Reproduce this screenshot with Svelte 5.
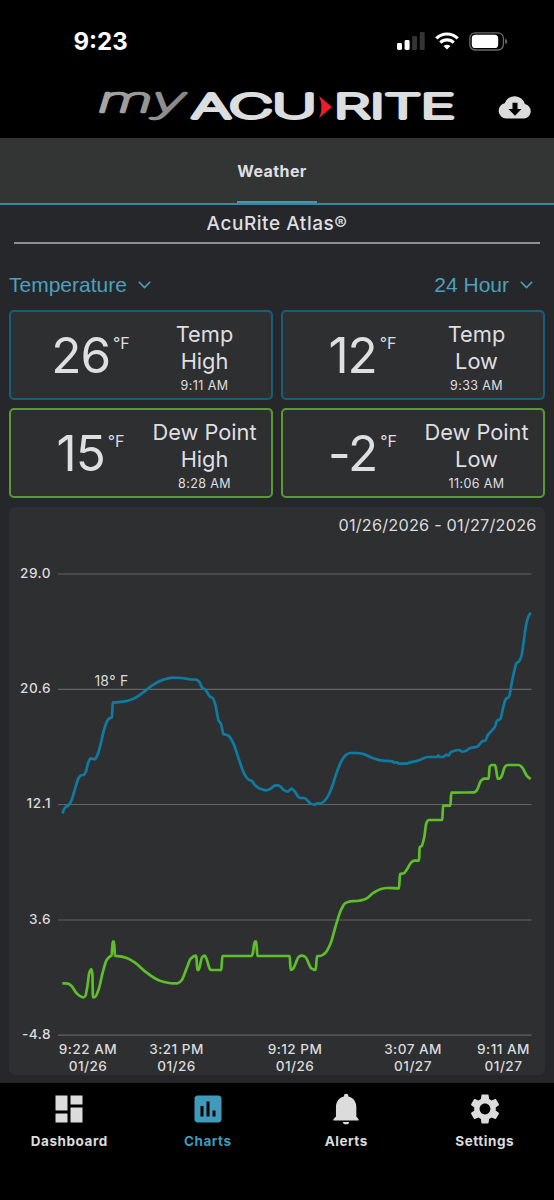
<script lang="ts">
type Point = [number, number];

const readings = [
	{ value: "26", label: "Temp", kind: "High", time: "9:11 AM", tone: "blue" },
	{ value: "12", label: "Temp", kind: "Low", time: "9:33 AM", tone: "blue" },
	{ value: "15", label: "Dew Point", kind: "High", time: "8:28 AM", tone: "green" },
	{ value: "-2", label: "Dew Point", kind: "Low", time: "11:06 AM", tone: "green" },
];

const yTicks = [
	{ label: "29.0", y: 67 },
	{ label: "20.6", y: 182.3 },
	{ label: "12.1", y: 297.5 },
	{ label: "3.6", y: 413 },
	{ label: "-4.8", y: 528.2 },
];

const xTicks = [
	{ time: "9:22 AM", date: "01/26", x: 79 },
	{ time: "3:21 PM", date: "01/26", x: 167.5 },
	{ time: "9:12 PM", date: "01/26", x: 286 },
	{ time: "3:07 AM", date: "01/27", x: 404 },
	{ time: "9:11 AM", date: "01/27", x: 494.5 },
];

const tabs = ["Dashboard", "Charts", "Alerts", "Settings"];
const activeTab = "Charts";

// samples are in device pixels, three to a css pixel
const temperature: Point[] = [
	[188, 940], [190, 932], [196, 922], [206, 916], [214, 902], [224, 870], [236, 834], [244, 826], [252, 824],
	[258, 814], [264, 790], [272, 775], [284, 778], [292, 766], [300, 740], [312, 690], [322, 662], [330, 654],
	[336, 652], [338, 608], [350, 607], [370, 605], [400, 596], [430, 577], [460, 554], [490, 539], [520, 533],
	[545, 534], [570, 538], [588, 539], [598, 546], [606, 562], [618, 571], [630, 590], [638, 594], [646, 614],
	[656, 662], [663, 672], [670, 702], [684, 706], [700, 730], [716, 776], [734, 824], [746, 839], [756, 843],
	[764, 854], [780, 866], [798, 871], [812, 866], [824, 857], [832, 856], [841, 859], [851, 870], [863, 875],
	[875, 866], [883, 873], [895, 890], [901, 894], [913, 894], [923, 902], [931, 910], [943, 914], [953, 910],
	[963, 910], [973, 903], [983, 890], [997, 858], [1011, 815], [1025, 782], [1039, 764], [1051, 759],
	[1071, 759], [1093, 763], [1121, 775], [1147, 782], [1177, 784], [1183, 788], [1191, 787], [1197, 791],
	[1217, 791], [1231, 787], [1245, 784], [1261, 779], [1283, 771], [1311, 771], [1315, 767], [1319, 771],
	[1329, 771], [1339, 764], [1345, 767], [1353, 756], [1377, 750], [1387, 755], [1397, 753], [1411, 744],
	[1431, 740], [1441, 730], [1447, 724], [1457, 721], [1463, 706], [1477, 690], [1485, 680], [1491, 662],
	[1501, 657], [1509, 625], [1517, 598], [1527, 590], [1535, 550], [1543, 512], [1549, 490], [1557, 484],
	[1565, 465], [1571, 424], [1579, 372], [1585, 350], [1592, 338],
];

const dewPoint: Point[] = [
	[187, 1450], [204, 1451], [214, 1457], [226, 1475], [238, 1487], [250, 1492], [256, 1488], [262, 1460],
	[268, 1418], [274, 1407], [277, 1422], [279, 1492], [285, 1491], [296, 1468], [308, 1418], [320, 1380],
	[332, 1368], [335, 1367], [338, 1325], [342, 1325], [345, 1368], [360, 1369], [380, 1374], [404, 1387],
	[440, 1418], [480, 1442], [520, 1450], [532, 1450], [544, 1442], [560, 1405], [572, 1376], [588, 1367],
	[590, 1380], [592, 1410], [596, 1410], [606, 1372], [614, 1367], [620, 1378], [628, 1404], [632, 1410],
	[664, 1410], [667, 1368], [754, 1368], [758, 1362], [764, 1325], [769, 1325], [772, 1368], [869, 1368],
	[872, 1410], [879, 1406], [897, 1370], [905, 1367], [915, 1370], [935, 1406], [947, 1410], [951, 1368],
	[961, 1368], [975, 1360], [991, 1332], [1007, 1278], [1023, 1230], [1035, 1210], [1051, 1204], [1071, 1203],
	[1095, 1198], [1121, 1178], [1143, 1167], [1161, 1164], [1197, 1165], [1200, 1122], [1211, 1120],
	[1221, 1108], [1233, 1088], [1243, 1082], [1257, 1082], [1259, 1042], [1265, 1038], [1273, 1010],
	[1279, 970], [1286, 960], [1327, 960], [1329, 917], [1351, 917], [1354, 878], [1423, 877], [1431, 870],
	[1443, 842], [1453, 836], [1466, 836], [1469, 800], [1475, 795], [1485, 795], [1488, 806], [1493, 836],
	[1499, 836], [1505, 828], [1515, 800], [1523, 795], [1557, 795], [1567, 803], [1581, 828], [1592, 837],
];

// monotone cubic, so the line never overshoots a sample
function linePath(samples: Point[]): string {
	const pts = samples.map(([x, y]) => [x / 3 - 9, y / 3 - 7]);
	const slopes = pts.slice(1).map((p, i) => (p[1] - pts[i][1]) / (p[0] - pts[i][0]));
	const tangents = pts.map((_, i) => {
		const before = slopes[i - 1];
		const after = slopes[i];
		if (before === undefined || after === undefined) return before ?? after;
		if (before * after <= 0) return 0;
		return (2 * before * after) / (before + after);
	});
	let d = `M${pts[0][0].toFixed(2)} ${pts[0][1].toFixed(2)}`;
	for (let i = 1; i < pts.length; i++) {
		const [x0, y0] = pts[i - 1];
		const [x1, y1] = pts[i];
		const dx = (x1 - x0) / 3;
		const c = [x0 + dx, y0 + dx * tangents[i - 1], x1 - dx, y1 - dx * tangents[i], x1, y1];
		d += `C${c.map((n) => n.toFixed(2)).join(" ")}`;
	}
	return d;
}
</script>

<div class="app">
	<div class="status-bar">
		<span class="clock">9:23</span>
		<div class="status-icons">
			<svg width="28" height="18" viewBox="0 0 28 18" fill="#fff">
				<rect x="0" y="11" width="5" height="7" rx="1.4" />
				<rect x="7.6" y="8" width="5" height="10" rx="1.4" />
				<rect x="15.1" y="4" width="5" height="14" rx="1.4" fill="#343434" />
				<rect x="22.7" y="0" width="5" height="18" rx="1.4" fill="#343434" />
			</svg>
			<svg width="24" height="18" viewBox="0 0 24 18" fill="none" stroke="#fff" stroke-width="3.2">
				<path d="M1.3 6.3a15.4 15.4 0 0 1 21.4 0" />
				<path d="M5.3 10.6a9.6 9.6 0 0 1 13.4 0" />
				<path d="M12 17.6l-3.5-3.5a5 5 0 0 1 7 0z" fill="#fff" stroke="none" />
			</svg>
			<svg width="39" height="19" viewBox="0 0 39 19">
				<rect x="0.8" y="0.8" width="33.6" height="17.2" rx="5.4" fill="none" stroke="#6b6b6b" stroke-width="1.3" />
				<rect x="2.8" y="2.7" width="26.4" height="13.4" rx="3.7" fill="#fff" />
				<path d="M36.2 6.5q2 1 2 2.9t-2 2.9z" fill="#6b6b6b" />
			</svg>
		</div>
	</div>

	<header class="brand-bar">
		<svg width="370" height="56" viewBox="-10 -6 370 56" role="img" aria-label="my AcuRite">
			<defs>
				<linearGradient id="my-fade" x1="0" y1="0" x2="1" y2="0">
					<stop offset="0" stop-color="#a8a8a8" />
					<stop offset="1" stop-color="#858585" />
				</linearGradient>
			</defs>
			<text class="logo-my" x="0" y="23.5" textLength="88" lengthAdjust="spacingAndGlyphs">my</text>
			<text class="logo-name" x="94" y="30" textLength="124" lengthAdjust="spacingAndGlyphs">ACU</text>
			<path d="M221 8l13 11-13 11q5-11 0-22z" fill="#ee1c25" />
			<text class="logo-name" x="236" y="30" textLength="121" lengthAdjust="spacingAndGlyphs">RITE</text>
		</svg>
		<svg class="cloud" width="34" height="24" viewBox="0 0 34 24">
			<path
				d="M8.2 23.5A7.7 7.7 0 0 1 6.6 8.3 10.6 10.6 0 0 1 26.9 9.1 7.3 7.3 0 0 1 26.4 23.5z"
				fill="#dcdcdc"
			/>
			<path d="M14.5 7.8h5v6.2h4L17 20.8 10.5 14h4z" fill="#000" />
		</svg>
	</header>

	<nav class="top-tabs">
		<span class="top-tab">Weather</span>
	</nav>

	<main>
		<h1>AcuRite Atlas®</h1>

		<div class="filters">
			{#each ["Temperature", "24 Hour"] as filter}
				<button>
					<span>{filter}</span>
					<svg width="13" height="8" viewBox="0 0 13 8" fill="none" stroke="currentColor" stroke-width="1.5">
						<path d="M0.8 0.8l5.7 5.8 5.7-5.8" />
					</svg>
				</button>
			{/each}
		</div>

		<section class="readings">
			{#each readings as r}
				<article class="reading {r.tone}">
					<div class="value">{r.value}<sup>°F</sup></div>
					<div class="info">
						<span>{r.label}</span>
						<span>{r.kind}</span>
						<small>{r.time}</small>
					</div>
				</article>
			{/each}
		</section>

		<section class="chart">
			<svg width="536" height="568" viewBox="0 0 536 568">
				<text class="range" x="527.6" y="23.7" text-anchor="end">01/26/2026 - 01/27/2026</text>
				{#each yTicks as tick}
					<line x1="49" x2="522.5" y1={tick.y} y2={tick.y} />
					<text class="y-label" x="42" y={tick.y + 3.8} text-anchor="end">{tick.label}</text>
				{/each}
				<path class="series blue" d={linePath(temperature)} />
				<path class="series green" d={linePath(dewPoint)} />
				<text class="callout" x="102.5" y="179.3" text-anchor="middle">18° F</text>
				{#each xTicks as tick}
					<text class="x-label" x={tick.x} y="547.3" text-anchor="middle">{tick.time}</text>
					<text class="x-label" x={tick.x} y="564.2" text-anchor="middle">{tick.date}</text>
				{/each}
			</svg>
		</section>
	</main>

	<nav class="bottom-nav">
		{#each tabs as tab}
			<a href="#{tab.toLowerCase()}" class:active={tab === activeTab}>
				<svg width="36" height="36" viewBox="0 0 24 24" fill="currentColor">
					{#if tab === "Dashboard"}
						<path d="M3 13h8V3H3v10zm0 8h8v-6H3v6zm10 0h8V11h-8v10zm0-18v6h8V3h-8z" />
					{:else if tab === "Charts"}
						<path
							d="M19 3H5c-1.1 0-2 .9-2 2v14c0 1.1.9 2 2 2h14c1.1 0 2-.9 2-2V5c0-1.1-.9-2-2-2zM9 17H7v-7h2v7zm4 0h-2V7h2v10zm4 0h-2v-4h2v4z"
						/>
					{:else if tab === "Alerts"}
						<path
							d="M14.1 20.6a2.1 1.6 0 0 1-4.2 0zM20.4 19.6v-.7L18.9 17v-6.400c0-3.500-2.300-6.200-5.300-6.900v-.4a1.500 1.500 0 0 0-3 0v.4c-3 .7-5.300 3.400-5.300 6.900V17l-1.700 1.900v.7z"
						/>
					{:else}
						<path
							fill-rule="evenodd"
							d="M19.14 12.94c.04-.3.06-.61.06-.94s-.02-.64-.07-.94l2.03-1.58c.18-.14.23-.41.12-.61l-1.92-3.32c-.12-.22-.37-.29-.59-.22l-2.39.96c-.5-.38-1.03-.7-1.62-.94l-.36-2.54c-.04-.24-.24-.41-.48-.41h-3.84c-.24 0-.43.17-.47.41l-.36 2.54c-.59.24-1.13.57-1.62.94l-2.39-.96c-.22-.08-.47 0-.59.22L2.74 8.87c-.12.21-.08.47.12.61l2.03 1.58c-.05.3-.09.63-.09.94s.02.64.07.94l-2.03 1.58c-.18.14-.23.41-.12.61l1.92 3.32c.12.22.37.29.59.22l2.39-.96c.5.38 1.03.7 1.62.94l.36 2.54c.05.24.24.41.48.41h3.84c.24 0 .44-.17.47-.41l.36-2.54c.59-.24 1.13-.56 1.62-.94l2.39.96c.22.08.47 0 .59-.22l1.92-3.32c.12-.22.07-.47-.12-.61l-2.01-1.58zM12 15.6c-1.98 0-3.6-1.62-3.6-3.6s1.62-3.6 3.6-3.6 3.6 1.62 3.6 3.6-1.62 3.6-3.6 3.6z"
						/>
					{/if}
				</svg>
				<span>{tab}</span>
			</a>
		{/each}
	</nav>
</div>

<style>
	:global(body) {
		background: #000;
	}

	.app {
		display: flex;
		flex-direction: column;
		width: 554px;
		height: 1200px;
		overflow: hidden;
		background: #000;
		color: #dedfe1;
		font-family: Inter, "Liberation Sans", sans-serif;
	}

	.status-bar {
		display: flex;
		justify-content: space-between;
		align-items: center;
		box-sizing: border-box;
		height: 82px;
		padding: 0 46px 0 73.5px;
		color: #fff;
	}

	.clock {
		font-size: 24px;
		font-weight: 700;
	}

	.status-icons {
		display: flex;
		align-items: center;
		gap: 10px;
	}

	.brand-bar {
		display: flex;
		justify-content: space-between;
		box-sizing: border-box;
		height: 56px;
		padding: 0 22px 0 88px;
	}

	.cloud {
		margin-top: 12.5px;
	}

	/* hairline letters under a heavy round stroke give the soft logo shapes */
	.logo-my,
	.logo-name {
		font-family: Inter, sans-serif;
		font-size: 33px;
		font-weight: 100;
		stroke-linejoin: round;
	}

	.logo-my {
		font-size: 34px;
		font-style: italic;
		fill: url(#my-fade);
		stroke: url(#my-fade);
		stroke-width: 2.4;
	}

	.logo-name {
		fill: #dcddde;
		stroke: #dcddde;
		stroke-width: 4;
	}

	.top-tabs {
		display: flex;
		justify-content: center;
		box-sizing: border-box;
		height: 67px;
		background: #333534;
		border-bottom: 2px solid #3a87a2;
	}

	.top-tab {
		box-sizing: border-box;
		width: 80px;
		padding-right: 10px;
		border-bottom: 2px solid #4097b5;
		line-height: 67px;
		font-size: 16px;
		font-weight: 700;
		letter-spacing: 0.4px;
		text-align: center;
	}

	main {
		box-sizing: border-box;
		height: 878px;
		padding: 0 9px;
		background: #26272a;
	}

	h1 {
		margin: 0 5px;
		border-bottom: 2px solid #8e8f91;
		line-height: 37px;
		font-size: 19px;
		font-weight: 500;
		letter-spacing: 0.55px;
		text-align: center;
	}

	.filters {
		display: flex;
		justify-content: space-between;
		align-items: center;
		height: 66px;
		padding: 16px 12px 0 0;
		box-sizing: border-box;
	}

	.filters button {
		display: flex;
		align-items: center;
		gap: 11px;
		padding: 0;
		border: 0;
		background: none;
		color: #4da0be;
		font-family: "Liberation Sans", Arial, sans-serif;
		font-size: 21px;
	}

	.readings {
		display: grid;
		grid-template-columns: 264px 264px;
		grid-template-rows: 90px 90px;
		gap: 8px;
	}

	.reading {
		display: grid;
		grid-template-columns: 1fr 133px;
		align-items: center;
		box-sizing: border-box;
		border: 2px solid;
		border-radius: 5px;
		background: #2e2f31;
	}

	.reading.blue {
		border-color: #195e79;
	}

	.reading.green {
		border-color: #5c9834;
	}

	.value {
		display: flex;
		justify-content: center;
		padding-left: 32px;
		line-height: 50px;
		font-size: 49.5px;
		letter-spacing: -1px;
	}

	.value sup {
		margin-left: 3px;
		line-height: 26px;
		font-size: 16px;
		letter-spacing: 0;
	}

	.info {
		display: flex;
		flex-direction: column;
		padding-top: 9px;
		text-align: center;
		line-height: 26.5px;
		font-size: 21.8px;
	}

	.info small {
		line-height: 24px;
		font-size: 12.5px;
		letter-spacing: 0.4px;
	}

	.chart {
		height: 568px;
		margin-top: 9px;
		border-radius: 6px;
		background: #2e2f31;
	}

	.chart svg {
		display: block;
	}

	.chart text {
		fill: #dadbdd;
	}

	.chart line {
		stroke: #646567;
		stroke-width: 1.2;
	}

	.range {
		font-size: 16.3px;
		letter-spacing: 0.2px;
	}

	.y-label,
	.x-label {
		font-size: 13.6px;
		font-weight: 500;
		letter-spacing: 0.45px;
	}

	.callout {
		font-size: 14px;
		letter-spacing: 0.3px;
	}

	.series {
		fill: none;
		stroke-width: 2.7;
		stroke-linejoin: round;
	}

	.series.blue {
		stroke: #0f7ba3;
	}

	.series.green {
		stroke: #5fbf2a;
	}

	.bottom-nav {
		display: flex;
		flex: 1;
		padding-top: 8px;
	}

	.bottom-nav a {
		display: flex;
		flex: 1;
		flex-direction: column;
		align-items: center;
		gap: 6px;
		color: #dcdcdc;
		font-size: 13.5px;
		font-weight: 700;
		letter-spacing: 0.55px;
		text-decoration: none;
	}

	.bottom-nav a.active {
		color: #409bbb;
	}
</style>
